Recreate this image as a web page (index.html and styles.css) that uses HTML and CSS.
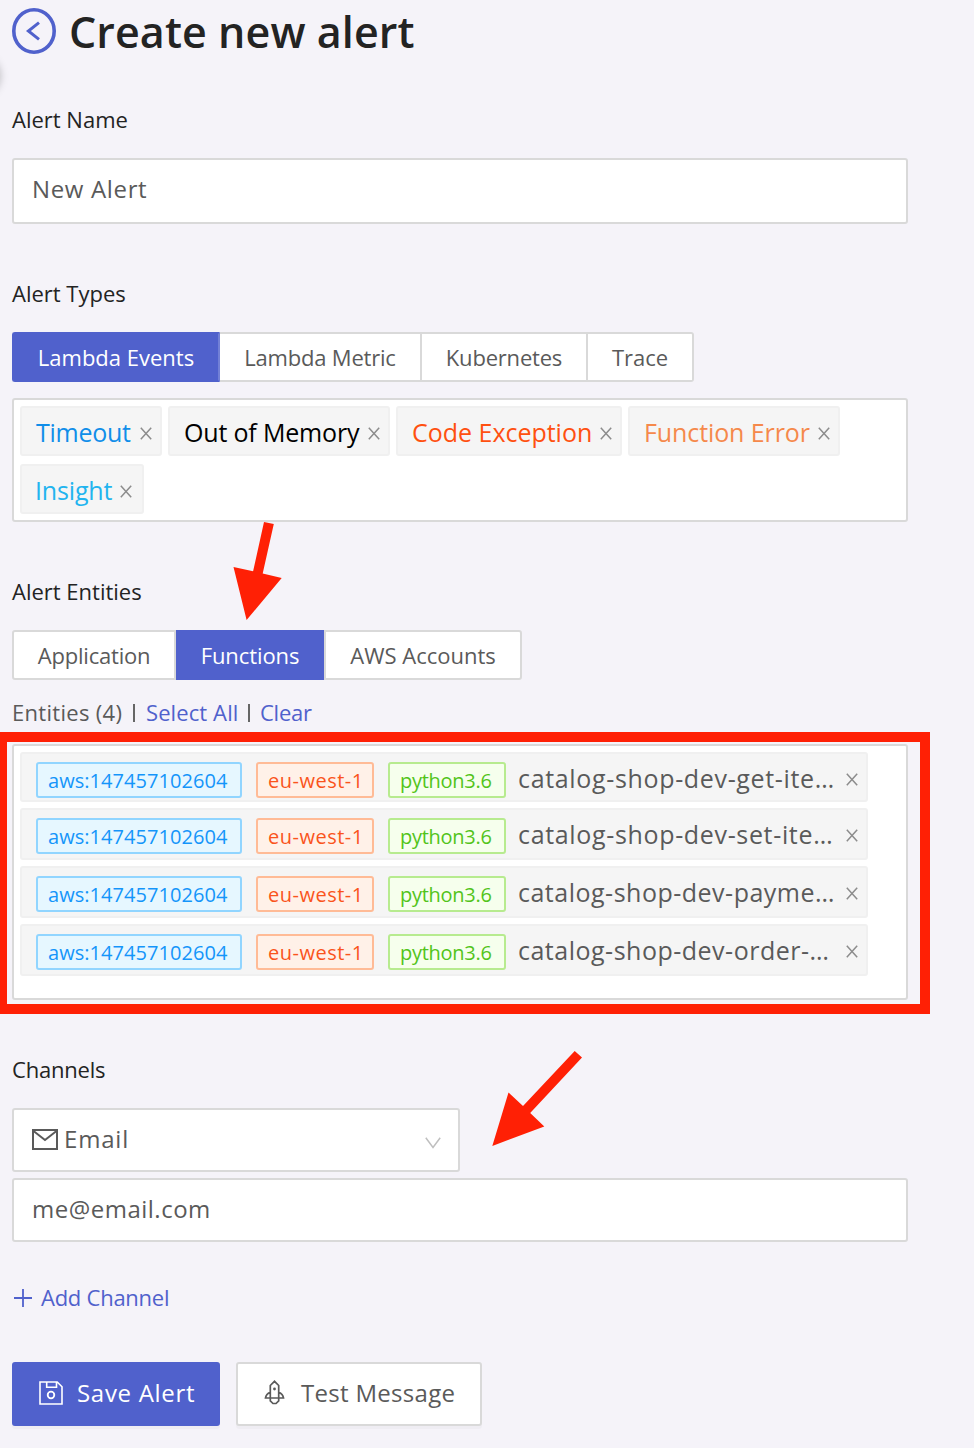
FILE: index.html
```html
<!DOCTYPE html>
<html lang="en">
<head>
<meta charset="utf-8">
<title>Create new alert</title>
<link rel="stylesheet" href="styles.css">
</head>
<body>
<svg class="defs" width="0" height="0">
  <symbol id="close" viewBox="0 0 12 13"><path d="M.8.7 11.2 12.3M11.2.7.8 12.3" fill="none" stroke="currentColor" stroke-width="1.5"/></symbol>
</svg>
<div class="side-handle"></div>
<main class="page">
  <header class="header">
    <svg class="back" viewBox="0 0 44 46"><ellipse cx="22" cy="23" rx="20.2" ry="21.2" fill="none" stroke="currentColor" stroke-width="3.6"/><path d="M27 14.6 16.4 23 27 31.4" fill="none" stroke="currentColor" stroke-width="3"/></svg>
    <h1 class="title">Create new alert</h1>
  </header>

  <section class="section">
    <div class="label">Alert Name</div>
    <div class="input name-input"><span>New Alert</span></div>
  </section>

  <section class="section">
    <div class="label">Alert Types</div>
    <div class="tabs type-tabs">
      <div class="tab active">Lambda Events</div>
      <div class="tab">Lambda Metric</div>
      <div class="tab">Kubernetes</div>
      <div class="tab">Trace</div>
    </div>
    <div class="type-box">
      <div class="type timeout"><span>Timeout</span><svg class="x"><use href="#close"/></svg></div>
      <div class="type memory"><span>Out of Memory</span><svg class="x"><use href="#close"/></svg></div>
      <div class="type exception"><span>Code Exception</span><svg class="x"><use href="#close"/></svg></div>
      <div class="type error"><span>Function Error</span><svg class="x"><use href="#close"/></svg></div>
      <div class="type insight"><span>Insight</span><svg class="x"><use href="#close"/></svg></div>
    </div>
  </section>

  <section class="section">
    <div class="label">Alert Entities</div>
    <div class="tabs entity-tabs">
      <div class="tab">Application</div>
      <div class="tab active">Functions</div>
      <div class="tab">AWS Accounts</div>
    </div>
    <div class="summary"><span class="count">Entities (4)</span><i class="bar"></i><a class="select-all">Select All</a><i class="bar"></i><a class="clear">Clear</a></div>
    <div class="entity-box">
      <div class="entity short"><span class="tag aws">aws:147457102604</span><span class="tag region">eu-west-1</span><span class="tag runtime">python3.6</span><span class="fn">catalog-shop-dev-get-ite…</span><svg class="x"><use href="#close"/></svg></div>
      <div class="entity"><span class="tag aws">aws:147457102604</span><span class="tag region">eu-west-1</span><span class="tag runtime">python3.6</span><span class="fn">catalog-shop-dev-set-ite…</span><svg class="x"><use href="#close"/></svg></div>
      <div class="entity"><span class="tag aws">aws:147457102604</span><span class="tag region">eu-west-1</span><span class="tag runtime">python3.6</span><span class="fn tight">catalog-shop-dev-payme…</span><svg class="x"><use href="#close"/></svg></div>
      <div class="entity"><span class="tag aws">aws:147457102604</span><span class="tag region">eu-west-1</span><span class="tag runtime">python3.6</span><span class="fn tight">catalog-shop-dev-order-…</span><svg class="x"><use href="#close"/></svg></div>
      <div class="highlight"></div>
    </div>
  </section>

  <section class="section">
    <div class="label channels">Channels</div>
    <div class="input select">
      <svg class="mail" viewBox="0 0 26 21"><path d="M1 1h24v19H1zM1.5 2 13 11 24.5 2" fill="none" stroke="currentColor" stroke-width="2"/></svg>
      <span class="email">Email</span>
      <svg class="chevron" viewBox="0 0 16 12"><path d="M.8.8 8 10.4 15.2.8" fill="none" stroke="currentColor" stroke-width="1.5"/></svg>
    </div>
    <div class="input address"><span>me@email.com</span></div>
    <a class="add"><svg class="plus" viewBox="0 0 18 18"><path d="M9 0v18M0 9h18" stroke="currentColor" stroke-width="1.8"/></svg><span>Add Channel</span></a>
  </section>

  <footer class="actions">
    <button class="btn primary"><svg class="disk" viewBox="0 0 24 24"><path d="M1 1h17.2L23 5.8V23H1zM7.7 1v5.2h9.8V1" fill="none" stroke="currentColor" stroke-width="1.6"/><circle cx="12" cy="14" r="3.3" fill="none" stroke="currentColor" stroke-width="1.8"/></svg><span>Save Alert</span></button>
    <button class="btn test"><svg class="rocket" viewBox="0 0 20 25"><path d="M5.800 18V5.500L10 1.300l4.200 4.200V18M5.800 12.300Q1.600 14 1 18h18q-.6-4-4.800-5.700M5.800 18v2.800L8.500 23.500h3l2.700-2.700V18" fill="none" stroke="currentColor" stroke-width="1.700"/><circle cx="10" cy="9" r="1.400" fill="currentColor"/></svg><span>Test Message</span></button>
  </footer>
</main>
<svg class="arrow arrow-functions" viewBox="0 0 50 100"><path d="M31 2 40.800 4 29.700 53.500 48.700 58 13.600 100 .5 47 20.100 51.300Z"/></svg>
<svg class="arrow arrow-channels" viewBox="0 0 92 96"><path d="M82.700 1 90 7.500 38.200 63 52.300 76.500.3 96 16.500 42.500 31 56Z"/></svg>
</body>
</html>
```
FILE: styles.css
```css
* { box-sizing: border-box; }

body {
  position: relative;
  margin: 0;
  width: 974px;
  height: 1448px;
  overflow: hidden;
  background: #f5f3f9;
  color: #5a5a5a;
  font-family: "Open Sans", "Noto Sans", sans-serif;
  font-size: 22px;
  white-space: nowrap;
}

svg { display: block; flex: none; }
.defs { position: absolute; }

.side-handle {
  position: absolute;
  left: -40px;
  top: 56px;
  width: 40px;
  height: 40px;
  border-radius: 50%;
  box-shadow: 0 0 9px rgba(0, 0, 0, .25);
}

.page { width: 908px; padding: 8px 0 0 12px; }

.header { display: flex; height: 46px; margin-bottom: 48px; color: #5061cc; }
.back { width: 44px; height: 46px; }
.title {
  margin: 0 0 0 13px;
  color: #232323;
  font-size: 43px;
  font-weight: 600;
  line-height: 48px;
  letter-spacing: .09px;
}

.section { margin-bottom: 52px; }
.label {
  height: 34px;
  margin-bottom: 22px;
  color: #232323;
  line-height: 34px;
}
.channels { letter-spacing: -.2px; }

.input {
  display: flex;
  align-items: center;
  height: 64px;
  padding: 0 18px 3px;
  background: #fff;
  border: 2px solid #d9d9d9;
  border-radius: 3px;
  font-size: 24px;
  letter-spacing: .5px;
}
.name-input { height: 66px; padding-bottom: 5px; letter-spacing: .65px; }

.tabs { display: grid; height: 50px; width: max-content; }
.tab {
  display: flex;
  align-items: center;
  justify-content: center;
  background: #fff;
  border: 2px solid #d9d9d9;
  border-left-width: 0;
  letter-spacing: -.2px;
}
.tab:first-child { border-left-width: 2px; border-radius: 3px 0 0 3px; }
.tab:last-child { border-radius: 0 3px 3px 0; letter-spacing: 0; }
.tab.active { background: #5061cc; border-color: #5061cc; color: #fff; letter-spacing: 0; }
.type-tabs { grid-template-columns: 208px 202px 166px 106px; }
.type-tabs .active { border-right-color: #7280d6; }
.entity-tabs { grid-template-columns: 164px 148px 198px; }
.entity-tabs .active { padding-left: 2px; letter-spacing: -.1px; }
.entity-tabs .tab:last-child { border-left-width: 2px; }

.type-box {
  display: flex;
  flex-wrap: wrap;
  align-content: flex-start;
  gap: 8px 6px;
  height: 124px;
  margin-top: 16px;
  padding: 6px;
  background: #fff;
  border: 2px solid #d9d9d9;
  border-radius: 3px;
}
.type {
  display: flex;
  align-items: center;
  justify-content: space-between;
  height: 50px;
  padding: 2px 8px 0 14px;
  background: #f5f5f5;
  border: 2px solid #f0f0f0;
  border-radius: 3px;
  font-size: 25px;
  letter-spacing: -.1px;
}
.x { width: 12px; height: 13px; margin-top: 2px; color: #8c8c8c; }
.timeout { width: 142px; color: #108ee9; letter-spacing: -.27px; }
.memory { width: 222px; color: #000; letter-spacing: -.17px; }
.exception { width: 226px; color: #ff5010; letter-spacing: -.02px; }
.error { width: 212px; color: #f5894b; }
.insight { width: 124px; padding-left: 13px; padding-right: 10px; color: #22b4ef; letter-spacing: -.16px; }

.summary { display: flex; align-items: center; height: 30px; margin: 17px 0; line-height: 30px; }
.count { width: 121px; letter-spacing: .3px; }
.select-all { width: 101px; margin-left: 11px; color: #5061cc; letter-spacing: .1px; }
.clear { margin-left: 10px; color: #5061cc; letter-spacing: -.25px; }
.bar { width: 2px; height: 18px; margin-top: 2px; background: #666; }
.select-all + .bar { margin-left: 1px; }

.entity-box {
  position: relative;
  display: flex;
  flex-direction: column;
  gap: 6px;
  height: 256px;
  padding: 6px;
  background: #fff;
  border: 2px solid #d9d9d9;
  border-radius: 3px;
}
.entity {
  display: flex;
  width: 848px;
  height: 52px;
  padding: 8px 8px 0 14px;
  background: #f5f5f5;
  border: 2px solid #f0f0f0;
  border-radius: 3px;
}
.entity.short { height: 50px; }
.tag {
  height: 36px;
  margin-right: 14px;
  padding-left: 10px;
  border: 2px solid;
  border-radius: 3px;
  font-size: 20px;
  line-height: 33px;
}
.aws { width: 206px; color: #1495fa; background: #e6f7ff; border-color: #91d5ff; letter-spacing: .05px; }
.region { width: 118px; color: #fa541c; background: #fff1e8; border-color: #ffbb96; letter-spacing: .5px; }
.runtime { width: 118px; margin-right: 12px; color: #52c41a; background: #f6ffed; border-color: #b7eb8f; letter-spacing: -.27px; }
.fn { width: 328px; font-size: 25px; line-height: 33px; letter-spacing: .66px; }
.fn.tight { letter-spacing: .5px; }
.entity .x { margin-top: 11px; }

.highlight {
  position: absolute;
  left: -14px;
  top: -14px;
  width: 930px;
  height: 282px;
  border: 10px solid #ff2005;
  border-left-width: 7px;
}

.select { width: 448px; margin-bottom: 6px; }
.mail { width: 26px; height: 21px; margin-top: 1px; }
.email { margin-left: 6px; letter-spacing: .8px; }
.chevron { width: 16px; height: 12px; margin: 8px -1px 0 auto; color: #bfbfbf; }
.add { display: flex; align-items: center; height: 34px; margin-top: 38px; color: #5061cc; letter-spacing: -.25px; }
.plus { width: 18px; height: 18px; margin: 2px 9px 0 2px; }

.actions { display: flex; gap: 16px; margin-top: -4px; }
.btn {
  display: flex;
  align-items: center;
  width: 246px;
  height: 64px;
  padding: 0 0 3px 26px;
  background: #fff;
  border: 2px solid #d9d9d9;
  border-radius: 3px;
  box-shadow: 0 3px 0 rgba(0, 0, 0, .025);
  color: #5a5a5a;
  font: 24px "Open Sans", "Noto Sans", sans-serif;
  letter-spacing: .3px;
}
.btn.primary { width: 208px; padding-left: 25px; background: #5061cc; border-color: #5061cc; color: #fff; letter-spacing: .7px; }
.disk { width: 24px; height: 24px; margin: 1px 14px 0 0; }
.rocket { width: 21px; height: 25px; margin-right: 16px; }

.arrow { position: absolute; fill: #ff2005; }
.arrow-functions { left: 233px; top: 520px; width: 50px; height: 100px; }
.arrow-channels { left: 492px; top: 1050px; width: 92px; height: 96px; }
```
